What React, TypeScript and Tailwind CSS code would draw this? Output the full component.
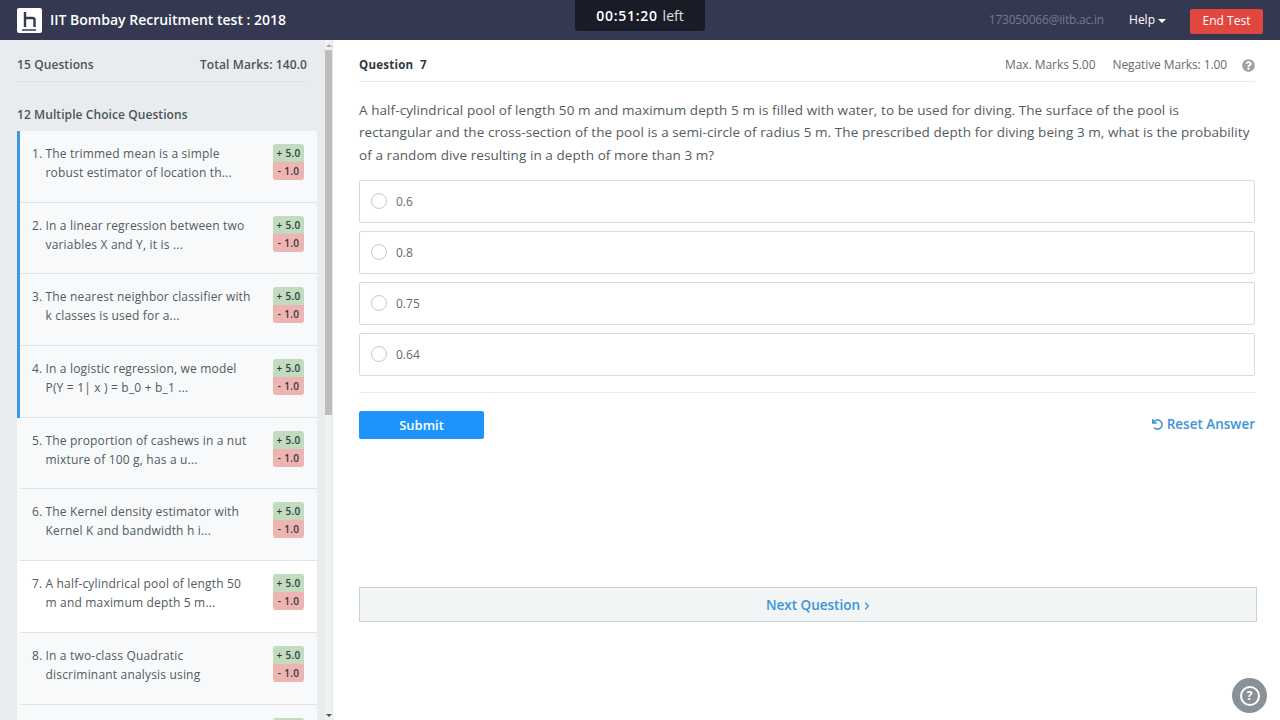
import React from "react";
import { ChevronRight } from "lucide-react";
import { FaQuestionCircle, FaUndo } from "react-icons/fa";

const QUESTIONS = [
  { id: 1, line1: "The trimmed mean is a simple", line2: "robust estimator of location th...", marked: true },
  { id: 2, line1: "In a linear regression between two", line2: "variables X and Y, it is ...", marked: true },
  { id: 3, line1: "The nearest neighbor classifier with", line2: "k classes is used for a...", marked: true },
  { id: 4, line1: "In a logistic regression, we model", line2: "P(Y = 1| x ) = b_0 + b_1 ...", marked: true },
  { id: 5, line1: "The proportion of cashews in a nut", line2: "mixture of 100 g, has a u..." },
  { id: 6, line1: "The Kernel density estimator with", line2: "Kernel K and bandwidth h i..." },
  { id: 7, line1: "A half-cylindrical pool of length 50", line2: "m and maximum depth 5 m...", current: true },
  { id: 8, line1: "In a two-class Quadratic", line2: "discriminant analysis using" },
];

const OPTIONS = ["0.6", "0.8", "0.75", "0.64"];

const Marks = () => (
  <div className="w-[31px] shrink-0 mt-[13px] h-[36px] rounded-[3px] overflow-hidden text-center text-[10px] font-semibold leading-[18px] text-[#2f3b3f] tracking-[0.3px] whitespace-pre">
    <div className="bg-[#c3dcc0] h-[18px]">+ 5.0</div>
    <div className="bg-[#eeb4b2] h-[18px]">- 1.0</div>
  </div>
);

const App = () => {
  return (
    <div className="h-[720px] w-[1280px] overflow-hidden bg-white font-['Open_Sans',sans-serif] flex flex-col">
      {/* header */}
      <header className="h-10 shrink-0 bg-[#343851] flex items-center relative pl-[17px] pr-[17px]">
        <svg className="shrink-0" width="25" height="25" viewBox="0 0 25 25">
          <rect width="25" height="25" rx="2" fill="#fff" />
          <path d="M8 4v15M8 10h7.500a2 2 0 0 1 2 2v7" fill="none" stroke="#343851" strokeWidth="2.400" />
          <path d="M5 22h14" stroke="#343851" strokeWidth="1.500" />
        </svg>
        <span className="ml-2 mb-[2px] text-[14px] font-semibold text-white">IIT Bombay Recruitment test : 2018</span>
        <div className="absolute left-[575px] top-0 w-[130px] h-[31px] bg-[#191b26] rounded-b-[2px] flex items-center justify-center text-white text-[14px] pb-[1px]">
          <span className="font-semibold tracking-[0.7px]">00:51:20</span>
          <span className="ml-[5px] text-[#e2e3e6]">left</span>
        </div>
        <span className="ml-auto text-[12px] text-[#74788a] tracking-[-0.2px]">173050066@iitb.ac.in</span>
        <span className="ml-[25px] text-[12px] text-white">Help</span>
        <span className="ml-[3px] mt-[1px] w-0 h-0 border-x-[4px] border-x-transparent border-t-[4px] border-t-white" />
        <button className="ml-[24px] w-[73px] h-[25px] mt-[2px] bg-[#e0473f] rounded-[2px] text-white text-[12px]">End Test</button>
      </header>

      <div className="flex flex-1 min-h-0">
        {/* sidebar */}
        <aside className="w-[333px] shrink-0 bg-[#e8ecee] flex">
          <div className="w-[325px] shrink-0 pl-[17px] overflow-hidden">
            <div className="w-[290px] h-[42px] border-b border-[#dde1e4] flex justify-between text-[12px] leading-[18px] font-semibold text-[#4a5459] pt-[16px] tracking-[0.1px]">
              <span>15 Questions</span>
              <span>Total Marks: 140.0</span>
            </div>
            <div className="text-[12px] font-semibold text-[#4a5459] mt-[24px] h-[25px] leading-[17px] tracking-[0.08px]">12 Multiple Choice Questions</div>
            <div className="w-[300px]">
              {QUESTIONS.map((q) => (
                <div
                  key={q.id}
                  className={`h-[71.7px] ${q.current ? "bg-white" : "bg-[#f7f9fa]"} ${q.marked ? "border-l-[3px] border-l-[#3b9ae1]" : "pl-[3px]"}`}
                >
                  <div className="h-full flex border-b border-[#dfe3e6] pl-[12px] pr-[13px]">
                    <div className="flex-1 flex pt-[13px] text-[12px] leading-[19px] text-[#515b60] tracking-[0.18px]">
                      <span className="w-[13.5px] shrink-0">{q.id}.</span>
                      <div className="whitespace-nowrap">
                        <div>{q.line1}</div>
                        <div>{q.line2}</div>
                      </div>
                    </div>
                    <Marks />
                  </div>
                </div>
              ))}
              <div className="h-[40px] bg-[#f7f9fa] flex justify-end pr-[13px]">
                <div className="w-[31px] h-[20px] mt-[13px] bg-[#c3dcc0] rounded-t-[3px]" />
              </div>
            </div>
          </div>
          {/* scrollbar */}
          <div className="w-2 h-full bg-[#f0f1f2] border-r border-[#e4e5e6] flex flex-col items-center relative">
            <span className="mt-[4px] w-0 h-0 border-x-[3px] border-x-transparent border-b-[3px] border-b-[#a9a9a9]" />
            <div className="mt-[3px] w-[7px] h-[365px] bg-[#bdbdbd]" />
            <span className="absolute bottom-[3px] w-0 h-0 border-x-[3px] border-x-transparent border-t-[3px] border-t-[#505050]" />
          </div>
        </aside>

        {/* main */}
        <main className="flex-1 min-w-0 pl-[26px] pr-[25px] relative">
          <div className="h-[42px] border-b border-[#e8ebed] flex items-start pt-[16px] text-[12px] leading-[18px] text-[#646c71]">
            <span className="font-bold text-[#2f3a3f] text-[11.5px] tracking-[0.25px]">Question&nbsp;&nbsp;7</span>
            <span className="ml-auto tracking-[-0.05px]">Max. Marks 5.00</span>
            <span className="ml-[17px] tracking-[-0.1px]">Negative Marks: 1.00</span>
            <FaQuestionCircle size={13} className="ml-[15px] mt-[2.500px] text-[#9aa2a7]" />
          </div>
          <p className="mt-[16.500px] text-[13.5px] leading-[22.500px] text-[#535c61] w-[896px] tracking-[0.075px]">
            A half-cylindrical pool of length 50 m and maximum depth 5 m is filled with water, to be used for diving. The surface of the pool is
            <br />
            rectangular and the cross-section of the pool is a semi-circle of radius 5 m. The prescribed depth for diving being 3 m, what is the probability of a random dive resulting in a depth of more than 3 m?
          </p>
          <div className="mt-[13.500px] flex flex-col gap-[8px]">
            {OPTIONS.map((o) => (
              <div key={o} className="h-[43px] border border-[#d8dadc] rounded-[2px] flex items-center pl-[11px] text-[12px] text-[#646c71]">
                <span className="w-4 h-4 rounded-full border border-[#c5c9cb] bg-white" />
                <span className="ml-[9px] mt-[2px]">{o}</span>
              </div>
            ))}
          </div>
          <div className="mt-[16px] border-t border-[#e8ebed] pt-[18px] flex items-center justify-between">
            <button className="w-[125px] h-[28px] pt-[2px] bg-[#1e93fb] rounded-[2px] text-white text-[13px] font-semibold">Submit</button>
            <span className="flex items-center text-[#3b94d9] text-[13.5px] font-semibold">
              <FaUndo size={11} className="mr-[4px]" />
              Reset Answer
            </span>
          </div>
          <div className="mt-[148px] -mr-[2px] h-[35px] bg-[#f2f5f6] border border-[#cfd2d4] flex items-center justify-center text-[#3b94d9] text-[13.5px] font-semibold pl-[23px] pt-[3px]">
            Next Question
            <ChevronRight size={12} strokeWidth={2.500} className="ml-[1px]" />
          </div>
          <div className="absolute right-[13px] bottom-[7px] w-[35px] h-[35px] rounded-full bg-[#8a9297] flex items-center justify-center">
            <div className="w-[20px] h-[20px] rounded-full border-2 border-white flex items-center justify-center text-white text-[12px] font-bold leading-none">?</div>
          </div>
        </main>
      </div>
    </div>
  );
};

export default App;
